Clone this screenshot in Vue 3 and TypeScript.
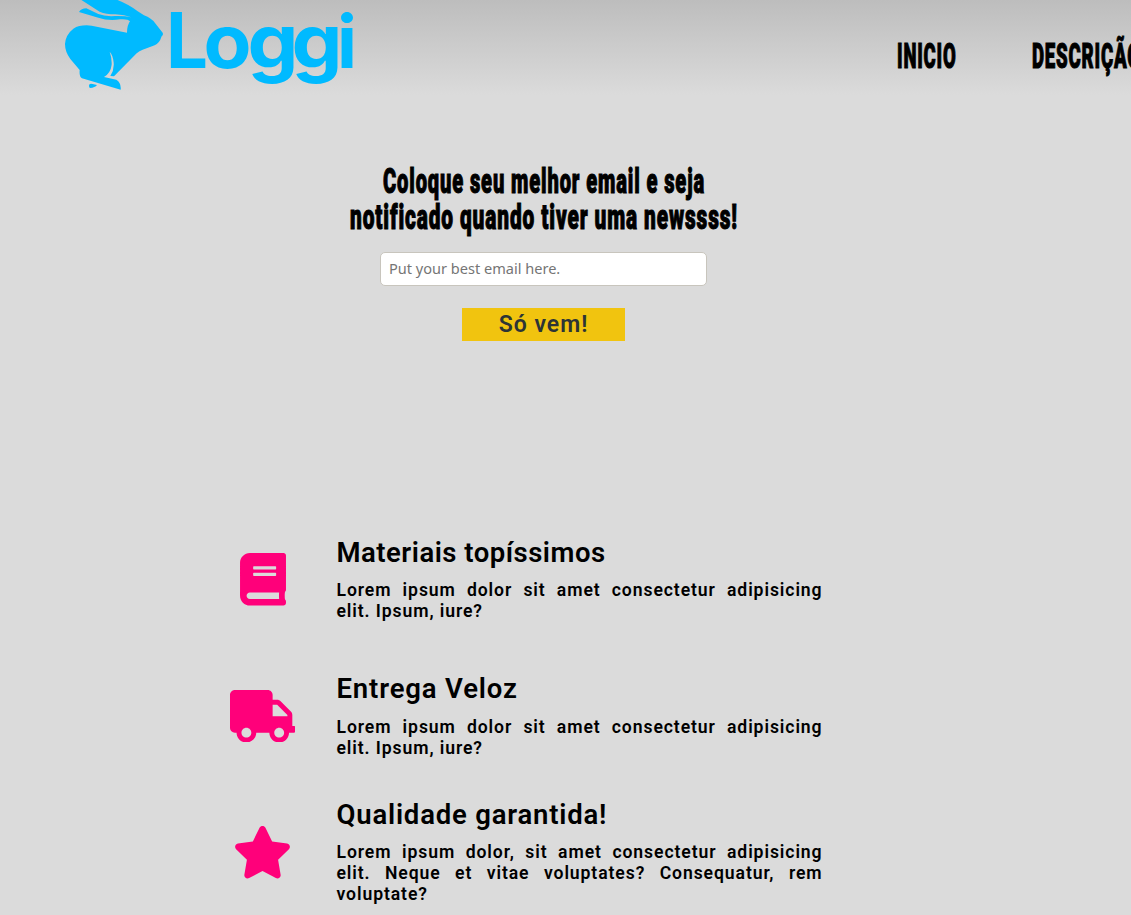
<script setup lang="ts">
interface Line { text: string; x: number; width: number }
interface Feature { name: string; title: string; text: string; viewBox: string; iconWidth: number; path: string }

const headline: Line[] = [
  { text: 'Coloque seu melhor email e seja', x: 33, width: 322 },
  { text: 'notificado quando tiver uma newssss!', x: 0, width: 388 },
]

const features: Feature[] = [
  {
    name: 'materials',
    title: 'Materiais topíssimos',
    text: 'Lorem ipsum dolor sit amet consectetur adipisicing elit. Ipsum, iure?',
    viewBox: '0 0 448 512',
    iconWidth: 46,
    path: 'M448 360V24c0-13.3-10.7-24-24-24H96C43 0 0 43 0 96v320c0 53 43 96 96 96h328c13.3 0 24-10.7 24-24v-16c0-7.5-3.5-14.3-8.9-18.7-4.2-15.4-4.2-59.3 0-74.7 5.4-4.3 8.9-11.1 8.9-18.6zM128 134c0-3.3 2.7-6 6-6h212c3.3 0 6 2.7 6 6v20c0 3.3-2.7 6-6 6H134c-3.3 0-6-2.7-6-6v-20zm0 64c0-3.3 2.7-6 6-6h212c3.3 0 6 2.7 6 6v20c0 3.3-2.7 6-6 6H134c-3.3 0-6-2.7-6-6v-20zm253.4 250H96c-17.7 0-32-14.3-32-32 0-17.6 14.4-32 32-32h285.4c-1.9 17.1-1.9 46.9 0 64z',
  },
  {
    name: 'delivery',
    title: 'Entrega Veloz',
    text: 'Lorem ipsum dolor sit amet consectetur adipisicing elit. Ipsum, iure?',
    viewBox: '0 0 640 512',
    iconWidth: 65.6,
    path: 'M624 352h-16V243.9c0-12.7-5.1-24.9-14.1-33.9L494 110.1c-9-9-21.2-14.1-33.9-14.1H416V48c0-26.5-21.5-48-48-48H48C21.5 0 0 21.5 0 48v320c0 26.5 21.5 48 48 48h16c0 53 43 96 96 96s96-43 96-96h128c0 53 43 96 96 96s96-43 96-96h48c8.8 0 16-7.2 16-16v-32c0-8.8-7.2-16-16-16zM160 464c-26.5 0-48-21.5-48-48s21.5-48 48-48 48 21.5 48 48-21.5 48-48 48zm320 0c-26.5 0-48-21.5-48-48s21.5-48 48-48 48 21.5 48 48-21.5 48-48 48zm80-208H416V144h44.1l99.9 99.9V256z',
  },
  {
    name: 'quality',
    title: 'Qualidade garantida!',
    text: 'Lorem ipsum dolor, sit amet consectetur adipisicing elit. Neque et vitae voluptates? Consequatur, rem voluptate?',
    viewBox: '0 0 576 512',
    iconWidth: 59,
    path: 'M259.3 17.8L194 150.2 47.9 171.5c-26.2 3.8-36.7 36.1-17.7 54.6l105.7 103-25 145.5c-4.5 26.3 23.2 46 46.4 33.7L288 439.6l130.7 68.7c23.2 12.2 50.9-7.4 46.4-33.7l-25-145.5 105.7-103c19-18.5 8.5-50.8-17.7-54.6L382 150.2 316.7 17.8c-11.7-23.6-45.6-23.9-57.4 0z',
  },
]
</script>

<template>
  <div class="page">
    <header class="header">
      <svg class="logo" width="310" height="95" viewBox="50 0 310 95" role="img" aria-label="Loggi">
        <g transform="translate(50 0) scale(.33333)">
          <path d="M88 -4 L195 -3 Q235 12 262 33 L282 46 Q305 55 315 69 L338 98 Q341 104 335 109 Q328 131 314 136 L278 149 Q268 152 260 160 L192 229 L181 228 Q193 209 191 188 Q189 165 179 155 Q186 174 185 194 Q182 219 162 231 L199 239 Q214 248 212 269 L96 235 Q87 231 89 210 L61 177 Q45 155 45 132 Q47 104 70 86 Q91 73 125 77 L231 98 Q231 76 240 64 Q234 56 210 58 Q174 63 145 53 L87 36 Q94 25 109 25 L145 42 Q165 50 195 48 Q225 47 243 52 Q225 45 196 43 Q168 43 149 35 Z" />
          <path d="M117 257 Q117 249 128 252 L141 255 Q135 263 120 264 Q117 262 117 257Z" />
        </g>
        <text class="wordmark" y="67.5"><tspan x="166" textLength="42" lengthAdjust="spacingAndGlyphs">L</tspan><tspan class="round" x="203.500" textLength="48" lengthAdjust="spacingAndGlyphs">o</tspan><tspan class="round" x="247.500" textLength="51" lengthAdjust="spacingAndGlyphs">g</tspan><tspan class="round" x="291.500" textLength="51" lengthAdjust="spacingAndGlyphs">g</tspan><tspan class="dot" x="337" textLength="20" lengthAdjust="spacingAndGlyphs">i</tspan></text>
      </svg>
      <nav class="nav">
        <a><svg class="display" width="60" height="46" viewBox="0 0 60 46"><text x="0" y="36" textLength="59.5" lengthAdjust="spacingAndGlyphs">INICIO</text></svg></a>
        <a><svg class="display" width="110" height="46" viewBox="0 0 110 46"><text x="0" y="36" textLength="109" lengthAdjust="spacingAndGlyphs">DESCRIÇÃO</text></svg></a>
      </nav>
    </header>

    <form class="signup" @submit.prevent>
      <h2>
        <svg v-for="line in headline" :key="line.text" class="display" width="388" height="36" viewBox="0 0 388 36">
          <text :x="line.x" y="29" :textLength="line.width" lengthAdjust="spacingAndGlyphs">{{ line.text }}</text>
        </svg>
      </h2>
      <input type="email" placeholder="Put your best email here." />
      <button type="submit">Só vem!</button>
    </form>

    <section class="features">
      <article v-for="feature in features" :key="feature.name" class="feature" :class="feature.name">
        <div class="icon">
          <svg :width="feature.iconWidth" height="52.5" :viewBox="feature.viewBox"><path :d="feature.path" /></svg>
        </div>
        <div class="copy">
          <h3>{{ feature.title }}</h3>
          <p>{{ feature.text }}</p>
        </div>
      </article>
    </section>
  </div>
</template>

<style>
html, body { margin: 0; background: #dbdbdb; }
</style>

<style scoped>
.page {
  width: 1131px;
  height: 915px;
  overflow: hidden;
  background: #dbdbdb;
  color: #000;
  font-family: Roboto, "Noto Sans", sans-serif;
}
.header {
  display: flex;
  height: 95px;
  background: linear-gradient(#bdbdbd, #dbdbdb);
}
.logo { flex: none; margin-left: 50px; fill: #00baff; }
.wordmark { font: 700 77px Inter, sans-serif; }
.wordmark .round { font-size: 75px; }
.wordmark .dot { font-size: 74px; }
.nav { display: flex; flex: none; gap: 75px; margin: 32px 0 0 536.500px; }
.nav a { display: block; flex: none; }
.display {
  display: block;
  overflow: visible;
  font: 900 35.500px Roboto, sans-serif;
  letter-spacing: 1.500px;
  stroke: #000;
  stroke-width: 1.1px;
}
.signup {
  display: flex;
  flex-direction: column;
  align-items: center;
  width: 388px;
  height: 416.25px;
  margin-left: 349.500px;
}
h2 { margin: 69px 0 16px; }
input {
  box-sizing: border-box;
  width: 327px;
  height: 34px;
  padding: 0 8px 2px;
  border: 1px solid #c8c5bd;
  border-radius: 5px;
  background: #fff;
  font: 14.55px "Noto Sans", sans-serif;
}
input::placeholder { color: #757575; }
button {
  width: 163px;
  height: 33px;
  margin-top: 22px;
  padding: 0;
  border: 0;
  background: #f1c40f;
  color: #2d3436;
  font: 600 23px Roboto, sans-serif;
  letter-spacing: 1px;
}
.features { width: 640px; margin-left: 188.500px; }
.feature { display: flex; align-items: center; height: 136.500px; }
.icon { display: flex; flex: none; justify-content: center; width: 148px; }
.icon svg { display: block; fill: #ff007a; }
.copy { width: 486px; }
h3 { margin: 0 0 11px; font-size: 27.500px; font-weight: 600; line-height: 32px; white-space: nowrap; }
.materials h3 { letter-spacing: 0.500px; }
.delivery h3 { margin-bottom: 12px; letter-spacing: 0.850px; }
.quality h3 { letter-spacing: 0.800px; }
.quality .copy { margin-bottom: 1px; }
p { margin: 0; font-size: 17.600px; font-weight: 600; line-height: 21px; letter-spacing: 0.900px; text-align: justify; }
</style>
